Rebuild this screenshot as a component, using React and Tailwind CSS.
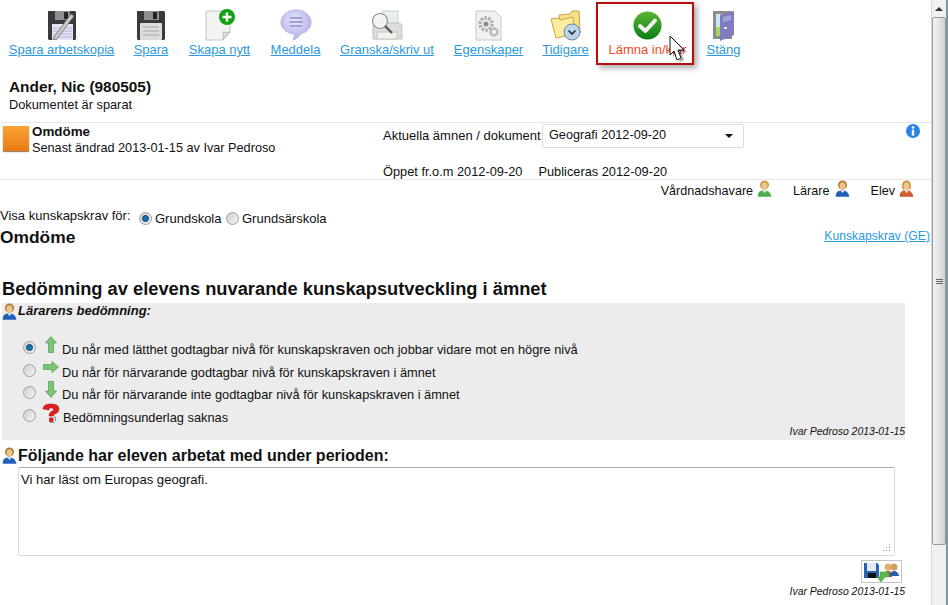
//React
import React from "react";

//* Toolbar icons
const DiskShape = () => (
  <>
    <path d="M1 1h27l1 1v27l-1 1H2l-1-1z" fill="#3a3a3e" />
    <rect x="8" y="1" width="15" height="9" fill="#8f8f93" />
    <rect x="17" y="2" width="4" height="7" fill="#242426" />
  </>
);

const SaveDraftIcon = () => (
  <svg width="30" height="30" viewBox="0 0 30 30">
    <DiskShape />
    <rect x="5" y="14" width="21" height="16" fill="#e3e5f5" />
    <path d="M6 18h19M6 21h19M6 24h19M6 27h19" stroke="#aeb4dc" strokeWidth="1" />
    <path d="M7 27 24 4l3 2L10 29l-4 1z" fill="#c9c9c9" stroke="#6b6b6b" strokeWidth="0.8" />
  </svg>
);

const SaveIcon = () => (
  <svg width="30" height="30" viewBox="0 0 30 30">
    <DiskShape />
    <rect x="4" y="13" width="22" height="17" rx="1" fill="#dcdcdc" />
    <path d="M7 17h16M7 21h16M7 25h16" stroke="#a3a3a3" strokeWidth="1" />
  </svg>
);

const NewIcon = () => (
  <svg width="30" height="32" viewBox="0 0 30 32">
    <path d="M1 2h24v21l-7 8H1z" fill="#f3f3f3" stroke="#c4c4c4" />
    <path d="M25 23c-3 1-6 0-7 0 1 2 0 6 0 8z" fill="#dcdcdc" stroke="#bdbdbd" />
    <circle cx="22" cy="8" r="8" fill="#12a112" />
    <path d="M22 3.500v9M17.500 8h9" stroke="#fff" strokeWidth="2.600" />
  </svg>
);

const MessageIcon = () => (
  <svg width="32" height="32" viewBox="0 0 32 32">
    <defs>
      <radialGradient id="msg" cx="45%" cy="35%" r="70%">
        <stop offset="0%" stopColor="#e9e9fb" />
        <stop offset="100%" stopColor="#a9a9e8" />
      </radialGradient>
    </defs>
    <path d="M16 1c8 0 15 5 15 12s-6 11-11 12c-1 3-4 5-7 6 1-2 2-4 1-6C7 24 1 20 1 13S8 1 16 1z" fill="url(#msg)" stroke="#b4b4e6" />
    <path d="M10 9h12M9 13h14M10 17h12" stroke="#8e8ec9" strokeWidth="1.500" />
  </svg>
);

const PrintIcon = () => (
  <svg width="32" height="30" viewBox="0 0 32 30">
    <rect x="11" y="1" width="16" height="14" fill="#e8edf0" stroke="#c9d2d6" />
    <path d="M2 17c0-3 2-4 4-4h21c3 0 4 2 4 4v11c0 1 0 1-1 1H3c-1 0-1 0-1-1z" fill="#dcdfda" stroke="#bcc0ba" />
    <rect x="6" y="22" width="20" height="7" fill="#f1f2ee" stroke="#c4c7c0" />
    <circle cx="9" cy="11" r="7.500" fill="#f2f5f3" fillOpacity="0.900" stroke="#8d9491" strokeWidth="1.200" />
    <path d="m14 16 7 7" stroke="#55595a" strokeWidth="2.400" />
  </svg>
);

const PropsIcon = () => (
  <svg width="27" height="31" viewBox="0 0 27 31">
    <path d="M1 1h19l6 6v23H1z" fill="#f1f1f1" stroke="#c8c8c8" />
    <circle cx="11" cy="14" r="6" fill="none" stroke="#b0b0b0" strokeWidth="3.500" strokeDasharray="2.500 1.200" />
    <circle cx="11" cy="14" r="2.500" fill="#8c8c8c" />
    <circle cx="19" cy="22" r="3.500" fill="none" stroke="#bbbbbb" strokeWidth="2.500" />
  </svg>
);

const HistoryIcon = () => (
  <svg width="31" height="31" viewBox="0 0 31 31">
    <path d="M9 5l11-1 2-3h7l1 22H11z" fill="#f6e089" stroke="#c4a23c" />
    <path d="M1 9l8-1 1 2 13-3 3 17-20 4z" fill="#fbec9f" stroke="#c9a63d" />
    <circle cx="22" cy="22" r="8" fill="#bcd3ea" stroke="#6c88a5" />
    <path d="m18.500 20.500 3.500 3.500 3.500-3.500" fill="none" stroke="#24303a" strokeWidth="1.600" />
  </svg>
);

const DoneIcon = () => (
  <svg width="29" height="29" viewBox="0 0 29 29">
    <defs>
      <linearGradient id="done" x1="0" y1="0" x2="0" y2="1">
        <stop offset="0%" stopColor="#58b62f" />
        <stop offset="100%" stopColor="#0d7d1a" />
      </linearGradient>
    </defs>
    <circle cx="14.500" cy="14.500" r="14" fill="url(#done)" />
    <path d="m7 15 5.500 5L22 9.500" fill="none" stroke="#f2f2f2" strokeWidth="4" strokeLinecap="round" strokeLinejoin="round" />
  </svg>
);

const DoorIcon = () => (
  <svg width="24" height="31" viewBox="0 0 24 31">
    <rect x="1" y="1" width="19" height="28" fill="#8b8b92" />
    <rect x="4" y="4" width="5" height="13" fill="#cfe6f6" />
    <rect x="4" y="17" width="5" height="9" fill="#a8d860" />
    <path d="M8 5 22 1v24L8 31z" fill="#7f7cc0" />
    <path d="M11 7l8-2v5l-8 2z" fill="#a3a1d8" />
    <rect x="12" y="17" width="3" height="2" fill="#e2e2f2" />
  </svg>
);

//* Small icons
const PersonIcon = ({ body, hair, curly }) => (
  <svg width="15" height="17" viewBox="0 0 15 17">
    <path d="M1 16.500c0-1 0-4 2-5s6-1 8 0 3 4 3 5z" fill={body} stroke={body} strokeWidth="0.500" />
    <path d="M5.500 10.500h4L7.500 13z" fill="#f4f4f4" />
    <circle cx="7.500" cy="5" r="4.500" fill={hair} />
    <ellipse cx="7.500" cy="6" rx="3" ry="3.700" fill="#eec48e" />
    {curly && <path d="M3 7.500h1.500M10.500 7.500H12M4 9.500h1M10 9.500h1" stroke={hair} strokeWidth="1.500" />}
    {curly && <path d="M3 13h9M4 15h7" stroke="#e68a3c" strokeWidth="1" strokeDasharray="1.500 1" />}
  </svg>
);

const Teacher = () => (
  <span className="mr-[1px]">
    <PersonIcon body="#1f5fb4" hair="#b07a2c" />
  </span>
);

const ArrowUpIcon = () => (
  <svg width="12" height="17" viewBox="0 0 12 17">
    <path d="M6 .5 11.500 7H8.500v9.500h-5V7H.5z" fill="#7cc477" stroke="#4f9c4c" strokeWidth="0.700" />
  </svg>
);

const ArrowDownIcon = () => (
  <svg width="12" height="17" viewBox="0 0 12 17">
    <path d="M6 16.500 11.500 10H8.500V.5h-5V10H.5z" fill="#7cc477" stroke="#4f9c4c" strokeWidth="0.700" />
  </svg>
);

const ArrowRightIcon = () => (
  <svg width="16" height="12" viewBox="0 0 16 12">
    <path d="M15.500 6 9 .5v3H.5v5H9v3z" fill="#7cc477" stroke="#4f9c4c" strokeWidth="0.700" />
  </svg>
);

const QuestionIcon = () => (
  <svg width="18" height="20" viewBox="0 0 18 20">
    <path d="M1 6C1 2 5 1 9 1s8 1 8 5c0 3-2 4-4 5-1 .5-1.500 1-1.500 2H7c0-2 .5-3.500 2.500-4.500 1-.5 2-1 2-2s-1-1.500-2.500-1.500S7 5.500 7 7z" fill="#e01f1f" stroke="#a81515" strokeWidth="0.500" />
    <rect x="7" y="14.500" width="4.500" height="4.500" rx="1" fill="#e01f1f" />
    <path d="M8 19.500h4.500M12 14h1.500V18" fill="none" stroke="#6fa3a3" strokeWidth="1" />
  </svg>
);

const InfoIcon = () => (
  <svg width="14" height="14" viewBox="0 0 14 14">
    <circle cx="7" cy="7" r="7" fill="#2a86e0" />
    <circle cx="7" cy="3.500" r="1.300" fill="#fff" />
    <rect x="5.800" y="5.800" width="2.400" height="5.800" fill="#fff" />
  </svg>
);

const CursorIcon = () => (
  <svg width="22" height="30" viewBox="0 0 22 30">
    <path d="M1 1v19l4-4 3 9 4-2-3-8h6z" fill="#000" opacity="0.300" transform="translate(3 2)" />
    <path d="M1 1v19l4-4 3 9 4-2-3-8h6z" fill="#fff" stroke="#111" />
  </svg>
);

const SaveShareIcon = () => (
  <svg width="38" height="20" viewBox="0 0 38 20">
    <path d="M1 1h13l2 2v13H1z" fill="#2a63ac" />
    <rect x="4" y="1" width="9" height="8" fill="#e4e9f2" />
    <rect x="5" y="11" width="8" height="5" fill="#111" />
    <circle cx="25" cy="5" r="3.500" fill="#e0b070" />
    <circle cx="31" cy="5" r="3.500" fill="#d29f5e" />
    <path d="M20 15c0-4 2-6 5-6s4 2 4 6z" fill="#b83a3a" />
    <path d="M27 14c0-3 2-5 4-5s5 2 5 5z" fill="#2a5fb0" />
    <path d="M26 10v5h-4l-4 5-4-5h3v-5z" fill="#58b94a" stroke="#3d9a36" strokeWidth="0.500" />
  </svg>
);

const Radio = ({ checked }) => (
  <span className="flex h-[13px] w-[13px] shrink-0 items-center justify-center rounded-full border border-[#a0a0a0] bg-gradient-to-br from-[#d0d0d0] to-[#f4f4f4]">
    {checked && <span className="h-[7px] w-[7px] rounded-full border border-[#0a3f66] bg-[#1578b4]" />}
  </span>
);

const tools = [
  { label: "Spara arbetskopia", icon: <SaveDraftIcon />, width: "w-[105px]" },
  { label: "Spara", icon: <SaveIcon />, width: "w-[34px]" },
  { label: "Skapa nytt", icon: <NewIcon />, width: "w-[63px]" },
  { label: "Meddela", icon: <MessageIcon />, width: "w-[49px]" },
  { label: "Granska/skriv ut", icon: <PrintIcon />, width: "w-[94px]" },
  { label: "Egenskaper", icon: <PropsIcon />, width: "w-[69px]" },
  { label: "Tidigare", icon: <HistoryIcon />, width: "w-[45px]" },
  { label: "Lämna in/klar", icon: <DoneIcon />, width: "w-[79px]", active: true },
  { label: "Stäng", icon: <DoorIcon />, width: "w-[33px]" },
];

const levels = [
  { text: "Du når med lätthet godtagbar nivå för kunskapskraven och jobbar vidare mot en högre nivå", icon: <ArrowUpIcon />, checked: true },
  { text: "Du når för närvarande godtagbar nivå för kunskapskraven i ämnet", icon: <ArrowRightIcon /> },
  { text: "Du når för närvarande inte godtagbar nivå för kunskapskraven i ämnet", icon: <ArrowDownIcon /> },
  { text: "Bedömningsunderlag saknas", icon: <QuestionIcon />, indent: "ml-[2px] translate-y-[2px]" },
];

const App = () => {
  return (
    <div className="flex h-[605px] w-[948px] overflow-hidden bg-white font-['Liberation_Sans',Arial,sans-serif] text-[12.8px] text-[#111]">
      <div className="relative w-[931px] shrink-0">
        {/* Toolbar */}
        <div className="flex h-[66px] gap-5 pl-[9px] pt-[9px]">
          {tools.map((t) => (
            <div key={t.label} className={`relative flex flex-col items-center ${t.width}`}>
              <div className="flex h-[32px] items-center">{t.icon}</div>
              <span className={t.active ? "mt-[1px] whitespace-nowrap text-[13px] leading-[16px] text-[#f04a23]" : "mt-[1px] whitespace-nowrap text-[13px] leading-[16px] text-[#2b9ae0] underline"}>
                {t.label}
              </span>
              {t.active && (
                <>
                  <div className="absolute -left-[12px] -top-[7px] h-[63px] w-[98px] border-[2px] border-[#b60d0d] shadow-[3px_3px_6px_rgba(0,0,0,0.35)]" />
                  <div className="absolute left-[61px] top-[26px]">
                    <CursorIcon />
                  </div>
                </>
              )}
            </div>
          ))}
        </div>

        {/* Student */}
        <div className="h-[56px] pl-[9px] pt-[13px]">
          <div className="text-[15.4px] font-bold leading-[16px]">Ander, Nic (980505)</div>
          <div className="mt-[3px] leading-[14px]">Dokumentet är sparat</div>
        </div>

        {/* Document info */}
        <div className="flex h-[58px] border-y border-[#e8e8e8]">
          <div className="ml-[3px] mt-[3px] h-[25px] w-[26px] bg-gradient-to-b from-[#f9a435] to-[#ea7a12] shadow-[0_1px_1px_rgba(90,50,0,0.6)]" />
          <div className="ml-[3px] w-[351px] pt-[1px] text-[12.7px] leading-[16px]">
            <div className="text-[13.4px] font-bold">Omdöme</div>
            <div>Senast ändrad 2013-01-15 av Ivar Pedroso</div>
          </div>
          <div className="flex w-[523px] flex-col pt-[1px] text-[12.8px]">
            <div className="flex h-[24px] items-center">
              <span className="w-[159px] whitespace-nowrap text-[13px]">Aktuella ämnen / dokument</span>
              <div className="flex h-[24px] w-[202px] items-center justify-between rounded-[2px] border border-[#dcdcdc] pl-[6px] pr-[10px]">
                <span className="text-[12.7px]">Geografi 2012-09-20</span>
                <span className="h-0 w-0 border-x-[4px] border-t-[4px] border-x-transparent border-t-[#111]" />
              </div>
            </div>
            <div className="mt-[17px] flex gap-[16px] leading-[14px]">
              <span>Öppet fr.o.m 2012-09-20</span>
              <span>Publiceras 2012-09-20</span>
            </div>
          </div>
          <div className="pt-[1px]">
            <InfoIcon />
          </div>
        </div>

        {/* Roles */}
        <div className="flex h-[23px] items-center justify-end gap-[21px] pr-[17px] text-[12.6px]">
          <div className="flex items-center gap-[4px]">
            Vårdnadshavare
            <span className="-translate-y-[3px]"><PersonIcon body="#49b04c" hair="#c99a3c" /></span>
          </div>
          <div className="flex items-center gap-[5px]">
            Lärare
            <span className="-translate-y-[3px]"><PersonIcon body="#1f5fb4" hair="#b07a2c" /></span>
          </div>
          <div className="flex items-center gap-[4px]">
            Elev
            <span className="-translate-y-[3px]"><PersonIcon body="#c8502a" hair="#c9963c" curly /></span>
          </div>
        </div>

        {/* Level choice */}
        <div className="flex h-[26px] items-end pb-[1px] text-[13px]">
          <span className="w-[139px] pb-[3px]">Visa kunskapskrav för:</span>
          <div className="flex items-center">
            <Radio checked />
            <span className="ml-[3px] w-[71px]">Grundskola</span>
            <Radio />
            <span className="ml-[3px]">Grundsärskola</span>
          </div>
        </div>

        <div className="flex h-[16px] items-center justify-between pr-[1px]">
          <h2 className="text-[17.4px] font-bold">Omdöme</h2>
          <a className="-translate-y-[1px] text-[12.2px] text-[#2b9ae0] underline">Kunskapskrav (GE)</a>
        </div>

        <h2 className="mt-[33px] h-[25px] pl-[2px] text-[18.3px] font-bold leading-[22px]">
          Bedömning av elevens nuvarande kunskapsutveckling i ämnet
        </h2>

        {/* Teacher assessment */}
        <div className="ml-[2px] h-[137px] w-[903px] bg-[#ececec]">
          <div className="flex h-[16px] items-center text-[13px] font-bold italic">
            <Teacher /> Lärarens bedömning:
          </div>
          <div className="mt-[20px] flex flex-col gap-[5.7px] pl-[21px]">
            {levels.map((l) => (
              <div key={l.text} className="flex h-[17px] items-center">
                <Radio checked={l.checked} />
                <span className="ml-[5px] flex w-[20px] justify-center -translate-y-[3px]">{l.icon}</span>
                <span className={l.indent || "ml-[1px] translate-y-[2px]"}>{l.text}</span>
              </div>
            ))}
          </div>
          <div className="mt-[1px] text-right text-[10.45px] italic leading-[14px]">Ivar Pedroso 2013-01-15</div>
        </div>

        {/* Work during period */}
        <div className="flex h-[27px] items-center pl-[2px] pt-[4px] text-[16px] font-bold">
          <Teacher /> Följande har eleven arbetat med under perioden:
        </div>
        <div className="relative ml-[18px] h-[89px] w-[877px] rounded-[2px] border border-[#d8dcdc] border-t-[#aaa] px-[2px] py-[2px] text-[13.1px]">
          Vi har läst om Europas geografi.
          <svg className="absolute bottom-[3px] right-[3px]" width="9" height="9" viewBox="0 0 9 9">
            <path d="M7 1h1v1H7zM4 4h1v1H4zM7 4h1v1H7zM1 7h1v1H1zM4 7h1v1H4zM7 7h1v1H7z" fill="#9a9a9a" />
          </svg>
        </div>
        <div className="flex justify-end pr-[29px] pt-[4px]">
          <div className="flex h-[23px] w-[41px] items-center justify-center border border-[#c4c4c4]">
            <SaveShareIcon />
          </div>
        </div>
        <div className="w-[905px] pt-[2px] text-right text-[10.45px] italic leading-[14px]">Ivar Pedroso 2013-01-15</div>
      </div>

      {/* Scrollbar */}
      <div className="flex w-[17px] flex-col border-l border-r-2 border-l-[#d8d8d8] border-r-[#7d93ad] bg-[#f0f0f0]">
        <div className="flex h-[17px] items-center justify-center">
          <span className="h-0 w-0 border-x-[4px] border-b-[4px] border-x-transparent border-b-[#333]" />
        </div>
        <div className="flex h-[528px] items-center justify-center rounded-[2px] border border-[#9a9a9a] bg-gradient-to-r from-[#f2f2f2] via-[#e4e4e4] to-[#cfcfcf]">
          <span className="flex w-[7px] flex-col gap-[1px]">
            <span className="h-[1px] bg-[#666]" />
            <span className="h-[1px] bg-[#666]" />
            <span className="h-[1px] bg-[#666]" />
          </span>
        </div>
      </div>
    </div>
  );
};

export default App;
